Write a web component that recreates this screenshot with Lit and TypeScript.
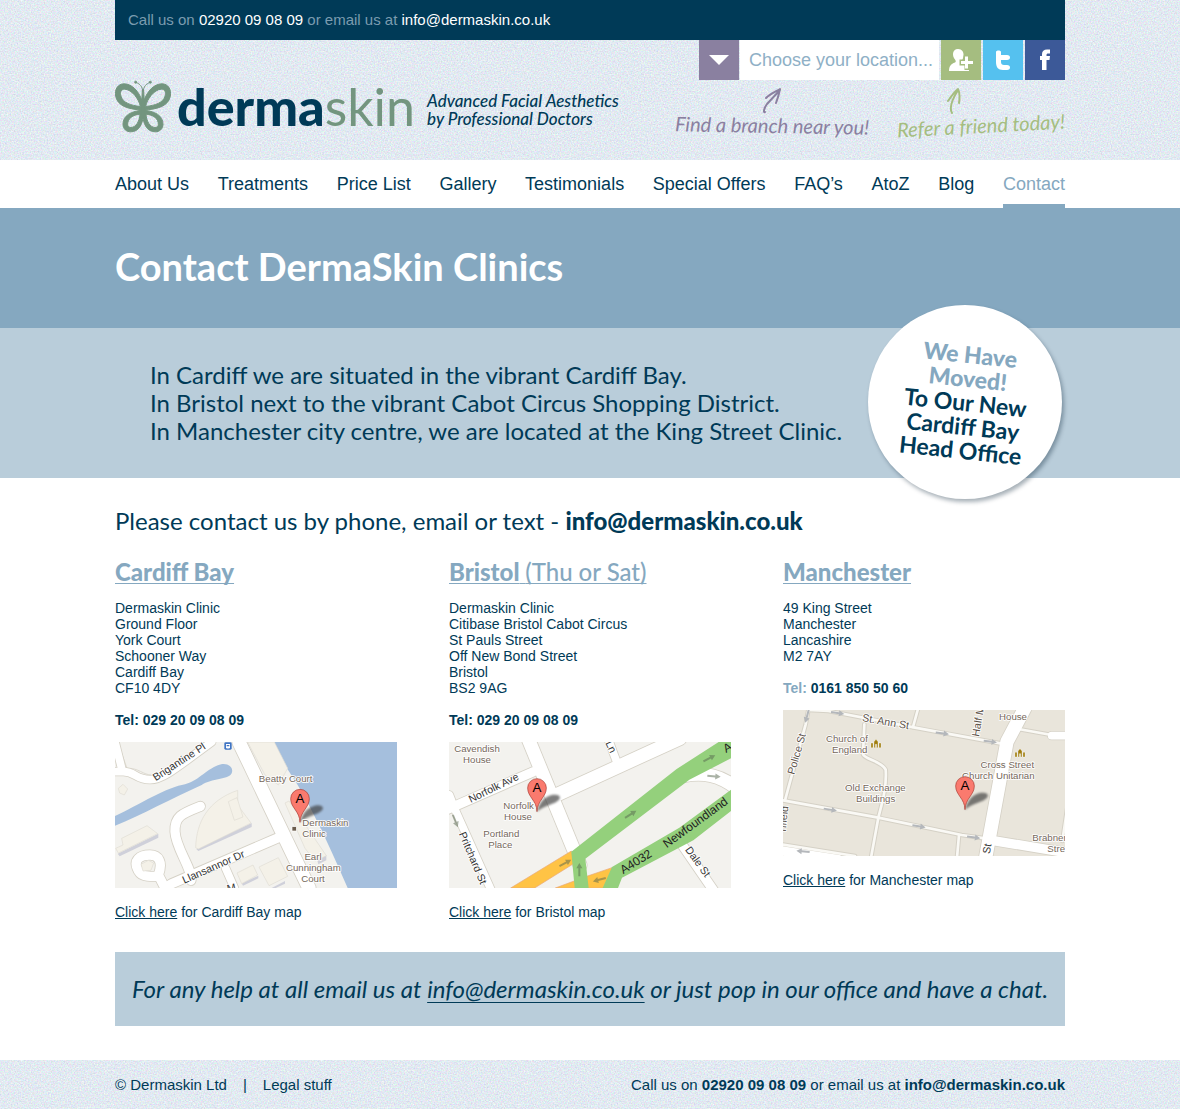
import { LitElement, html, css, svg } from "lit";
import { customElement, property } from "lit/decorators.js";
import { classMap } from "lit/directives/class-map.js";

type MapName = "cardiff" | "bristol" | "manchester";

interface Clinic {
  name: string;
  note?: string;
  address: string[];
  tel: string;
  paleTel?: boolean;
  map: MapName;
  mapLabel: string;
}

const NAV = [
  "About Us", "Treatments", "Price List", "Gallery", "Testimonials",
  "Special Offers", "FAQ’s", "AtoZ", "Blog", "Contact",
];

const CLINICS: Clinic[] = [
  {
    name: "Cardiff Bay",
    address: ["Dermaskin Clinic", "Ground Floor", "York Court", "Schooner Way", "Cardiff Bay", "CF10 4DY"],
    tel: "029 20 09 08 09",
    map: "cardiff",
    mapLabel: "Cardiff Bay",
  },
  {
    name: "Bristol",
    note: "(Thu or Sat)",
    address: ["Dermaskin Clinic", "Citibase Bristol Cabot Circus", "St Pauls Street", "Off New Bond Street", "Bristol", "BS2 9AG"],
    tel: "029 20 09 08 09",
    map: "bristol",
    mapLabel: "Bristol",
  },
  {
    name: "Manchester",
    address: ["49 King Street", "Manchester", "Lancashire", "M2 7AY"],
    tel: "0161 850 50 60",
    paleTel: true,
    map: "manchester",
    mapLabel: "Manchester",
  },
];

/* Pin with its cast shadow; (x, y) is the tip. */
const pin = (x: number, y: number) => svg`
  <g transform="translate(${x} ${y})">
    <path class="pin-shadow" d="M0 0 C6 -24 20 -44 44 -50 C64 -54 74 -46 66 -36 C54 -22 22 -20 0 0Z"/>
    <path class="pin" d="M0 0 C-1 -34 -28 -44 -28 -71 A28 28 0 0 1 28 -71 C28 -44 1 -34 0 0Z"/>
    <text class="pin-letter" x="0" y="-59">A</text>
  </g>`;

const arrow = (x: number, y: number, angle: number) => svg`
  <path class="way" transform="translate(${x} ${y}) rotate(${angle})"
    d="M-20 -3H4V-9L20 0L4 9V3H-20Z"/>`;

const church = (x: number, y: number) => svg`
  <path class="church" transform="translate(${x} ${y})"
    d="M0 8H6V22H0Z M9 4L15 -3L21 4V22H17V12H13V22H9Z M24 8H30V22H24Z"/>`;

const cardiffMap = svg`
  <rect class="land" x="30" y="21" width="846" height="438"/>
  <path class="water" d="M508 21H876V459H728C690 370 640 260 590 170C565 125 520 70 508 21Z"/>
  <path class="water" d="M30 243C110 205 150 175 220 152C280 142 290 112 335 92C365 78 388 95 380 115C370 135 320 130 290 150C200 190 110 240 30 272Z"/>
  <path class="block" d="M30 118L46 121L76 120M38 21L66 100C100 98 115 120 140 120"/>
  <g class="casing">
    <path class="w24" d="M30 110H52C90 108 90 134 135 134C170 134 200 110 320 21"/>
    <path class="w24" d="M30 21L52 108"/>
    <path class="w40" d="M402 21L612 459"/>
    <path class="w28" d="M286 214C230 236 208 244 210 290C212 340 262 400 258 436"/>
    <path class="w28" d="M520 308L200 446L180 459"/>
    <path class="w28" d="M180 459L160 420C175 380 160 360 135 360C100 360 88 378 96 398C106 428 130 424 160 424"/>
    <path class="w24" d="M362 400L388 459"/>
  </g>
  <g class="road">
    <path class="w24" d="M30 110H52C90 108 90 134 135 134C170 134 200 110 320 21"/>
    <path class="w24" d="M30 21L52 108"/>
    <path class="w40" d="M402 21L612 459"/>
    <path class="w28" d="M286 214C230 236 208 244 210 290C212 340 262 400 258 436"/>
    <path class="w28" d="M520 308L200 446L180 459"/>
    <path class="w28" d="M180 459L160 420C175 380 160 360 135 360C100 360 88 378 96 398C106 428 130 424 160 424"/>
    <path class="w24" d="M362 400L388 459"/>
  </g>
  <g class="shade">
    <path d="M274 342L440 264V276L280 348Z"/>
    <path d="M38 356L160 296V308L44 364Z"/>
    <path d="M410 445L460 422V430L414 452Z"/>
    <path d="M500 459L540 438V446L512 459Z"/>
    <path d="M636 372L664 360V376L640 388Z"/>
  </g>
  <g class="building">
    <path d="M272 338C274 260 310 196 398 166V210L438 264L280 342Z"/>
    <path d="M370 200L396 188L414 246L388 256Z"/>
    <path d="M50 310L126 272L158 296L40 354L32 340L54 330Z"/>
    <path d="M396 414L444 390L458 420L410 446Z"/>
    <path d="M462 396L520 368L548 424L492 452Z"/>
    <path d="M428 21H508L548 100L520 150L480 120Z"/>
    <path d="M540 204L552 198L664 362L630 378L600 340Z"/>
    <path d="M40 160L54 148L68 162L58 180L44 174Z"/>
    <path d="M108 388L130 376L146 384L138 406L114 408Z"/>
  </g>
  <g>
    <rect class="bus" x="358" y="22" width="22" height="22" rx="4"/>
    <path class="bus-glyph" d="M363 27H375V39H373V41H370V39H368V41H365V39H363ZM365 30V34H373V30Z"/>
  </g>
  <rect class="spot" x="561" y="275" width="13" height="13"/>
  ${pin(585, 262)}
  <text class="street" transform="translate(152 139) rotate(-33)">Brigantine Pl</text>
  <text class="street" transform="translate(238 446) rotate(-24)">Llansannor Dr</text>
  <text class="street" transform="translate(368 472) rotate(-12)">M</text>
  <text class="place mid" x="542" y="141">Beatty Court</text>
  <text class="place" x="592" y="274">Dermaskin</text>
  <text class="place" x="592" y="306">Clinic</text>
  <text class="place mid" x="624" y="376">Earl</text>
  <text class="place mid" x="625" y="409">Cunningham</text>
  <text class="place mid" x="624" y="441">Court</text>`;

const bristolMap = svg`
  <rect class="land" x="27" y="21" width="846" height="438"/>
  <g class="casing">
    <path class="w40" d="M260 0L420 390"/>
    <path class="w28" d="M20 224L280 110"/>
    <path class="w40" d="M340 184L720 10"/>
    <path class="w24" d="M28 180L46 226L160 480"/>
    <path class="w24" d="M500 0L530 80"/>
    <path class="w28" d="M720 320L830 480"/>
    <path class="w40" d="M730 122C790 110 840 120 890 160"/>
  </g>
  <g class="road">
    <path class="w40" d="M260 0L420 390"/>
    <path class="w28" d="M20 224L280 110"/>
    <path class="w40" d="M340 184L720 10"/>
    <path class="w24" d="M28 180L46 226L160 480"/>
    <path class="w24" d="M500 0L530 80"/>
    <path class="w28" d="M720 320L830 480"/>
    <path class="w40" d="M730 122C790 110 840 120 890 160"/>
  </g>
  <path class="orange" d="M212 459L394 348L404 384L284 459Z"/>
  <path class="orange" d="M346 459L440 424L516 398L500 459Z"/>
  <path class="green" d="M873 21H836L710 102L394 350L404 459H446L436 371L748 134L873 70Z"/>
  <path class="green" d="M873 164L718 278L516 396L488 459H534L546 428L760 316L873 228Z"/>
  <g class="bw">
    ${arrow(376, 384, -28)}${arrow(418, 404, -90)}${arrow(572, 238, -32)}
    ${arrow(808, 70, -28)}${arrow(822, 124, 4)}${arrow(478, 434, 165)}${arrow(46, 258, 68)}
  </g>
  ${pin(291, 230)}
  <text class="place mid" x="111" y="52">Cavendish</text>
  <text class="place mid" x="111" y="85">House</text>
  <text class="street" transform="translate(92 204) rotate(-26)">Norfolk Ave</text>
  <text class="place mid" x="236" y="223">Norfolk</text>
  <text class="place mid" x="234" y="255">House</text>
  <text class="place mid" x="184" y="307">Portland</text>
  <text class="place mid" x="181" y="340">Place</text>
  <text class="street" transform="translate(56 296) rotate(67)">Pritchard St</text>
  <text class="street" transform="translate(496 24) rotate(65)">Ln</text>
  <text class="street" transform="translate(734 344) rotate(54)">Dale St</text>
  <text class="major" transform="translate(550 418) rotate(-32)">A4032</text>
  <text class="major" transform="translate(680 340) rotate(-36)">Newfoundland</text>
  <text class="major" transform="translate(858 54) rotate(-30)">A4</text>`;

const manchesterMap = svg`
  <rect class="town" x="24" y="27" width="846" height="438"/>
  <g class="casing">
    <path class="w12" d="M100 27L92 70L30 298"/>
    <path class="w12" d="M100 27L160 30L420 80L680 128"/>
    <path class="w12" d="M24 298L310 350L560 402L630 412"/>
    <path class="w12" d="M268 70L264 160C270 176 320 180 332 206C336 260 320 310 310 350L288 470"/>
    <path class="w12" d="M552 402L546 470"/>
    <path class="w12" d="M414 78L430 20"/>
    <path class="w12" d="M20 430L240 465"/>
    <path class="w12" d="M730 84L830 102"/>
    <path class="w12" d="M880 300L862 420"/>
    <path class="w40" d="M750 20L696 122L632 470"/>
    <path class="w28" d="M650 418L880 456"/>
    <path class="w24" d="M830 104H880"/>
  </g>
  <g class="road">
    <path class="w12" d="M100 27L92 70L30 298"/>
    <path class="w12" d="M100 27L160 30L420 80L680 128"/>
    <path class="w12" d="M24 298L310 350L560 402L630 412"/>
    <path class="w12" d="M268 70L264 160C270 176 320 180 332 206C336 260 320 310 310 350L288 470"/>
    <path class="w12" d="M552 402L546 470"/>
    <path class="w12" d="M414 78L430 20"/>
    <path class="w12" d="M20 430L240 465"/>
    <path class="w12" d="M730 84L830 102"/>
    <path class="w12" d="M880 300L862 420"/>
    <path class="w40" d="M750 20L696 122L632 470"/>
    <path class="w28" d="M650 418L880 456"/>
    <path class="w24" d="M830 104H880"/>
    <path class="w28" d="M24 450L190 476"/>
  </g>
  ${arrow(96, 46, 105)}${arrow(188, 36, 8)}${arrow(502, 97, 8)}${arrow(646, 122, 8)}
  ${arrow(166, 326, 9)}${arrow(432, 376, 9)}${arrow(596, 409, 8)}${arrow(84, 451, 185)}
  ${church(288, 118)}${church(720, 146)}
  <text class="place mid" x="714" y="58">House</text>
  <text class="place" x="153" y="124">Church of</text>
  <text class="place" x="171" y="156">England</text>
  <text class="place mid" x="301" y="271">Old Exchange</text>
  <text class="place mid" x="302" y="304">Buildings</text>
  <text class="place mid" x="697" y="202">Cross Street</text>
  <text class="place mid" x="670" y="235">Church Unitarian</text>
  <text class="place" x="772" y="420">Brabner</text>
  <text class="place" x="817" y="452">Stre</text>
  <text class="street soft" transform="translate(260 60) rotate(10)">St. Ann St</text>
  <text class="street soft" transform="translate(58 222) rotate(-74)">Police St</text>
  <text class="street soft" transform="translate(612 108) rotate(-80)">Half Moon</text>
  <text class="street soft" transform="translate(32 392) rotate(-84)">nfield</text>
  <text class="street" transform="translate(644 460) rotate(-80)">St</text>
  ${pin(570, 326)}`;

const MAPS = {
  cardiff: { box: "30 21 846 438", art: cardiffMap },
  bristol: { box: "27 21 846 438", art: bristolMap },
  manchester: { box: "24 27 846 438", art: manchesterMap },
};

@customElement("clinic-map")
export class ClinicMap extends LitElement {
  @property() name: MapName = "cardiff";
  @property() label = "";

  static styles = css`
    :host { display: block; }
    svg { display: block; width: 100%; height: auto; font-family: "Liberation Sans", Arial, sans-serif; }
    .land { fill: #f3f2ee; }
    .town { fill: #e9e5db; }
    .water { fill: #a5bfdd; }
    .block { fill: none; stroke: #dedbd2; stroke-width: 3; }
    .casing, .road { fill: none; stroke-linecap: round; stroke-linejoin: round; }
    .casing { stroke: #d5d1c6; }
    .road { stroke: #fff; }
    .casing .w12 { stroke-width: 14; }
    .casing .w24 { stroke-width: 28; }
    .casing .w28 { stroke-width: 33; }
    .casing .w40 { stroke-width: 45; }
    .road .w12 { stroke-width: 8; stroke: #faf9f5; }
    .road .w24 { stroke-width: 23; }
    .road .w28 { stroke-width: 28; }
    .road .w40 { stroke-width: 40; }
    .building { fill: #f4f1e8; stroke: #dfdcd3; stroke-width: 2; }
    .shade { fill: #cfd0da; }
    .orange { fill: #ffc345; stroke: #e8a87c; stroke-width: 2; }
    .green { fill: #94d07c; }
    .way { fill: #b4b7bb; }
    .bw .way { fill: #55664e; opacity: 0.5; }
    .church { fill: #a07d0c; stroke: #fff; stroke-width: 1; }
    .bus { fill: #3f74c4; }
    .bus-glyph { fill: #fff; fill-rule: evenodd; }
    .spot { fill: #6b5c4c; stroke: #fff; stroke-width: 2; }
    .pin { fill: #fa7a6e; stroke: #a63a31; stroke-width: 2; }
    .pin-shadow { fill: #3a3a3a; opacity: 0.65; filter: blur(3px); }
    .pin-letter { font-size: 40px; text-anchor: middle; }
    text { paint-order: stroke; stroke: #fff; stroke-width: 5; stroke-linejoin: round; }
    .pin-letter, .major { stroke: none; }
    .place { font-size: 29px; fill: #75675a; }
    .mid { text-anchor: middle; }
    .street { font-size: 32px; fill: #333; }
    .soft { fill: #5c5148; }
    .major { font-size: 36px; fill: #222; }
  `;

  render() {
    const { box, art } = MAPS[this.name];
    return html`<svg viewBox=${box} role="img" aria-label=${this.label}>${art}</svg>`;
  }
}

/* One side of the butterfly; the other is its mirror image. */
const wings = svg`
  <path d="M101 105C99 62 72 26 42 26C23 26 13 44 17 63C22 91 52 103 101 105ZM91 94C87 72 66 43 44 42C33 42 29 52 33 63C38 82 62 91 91 94Z"/>
  <path d="M101 105C62 107 39 122 39 147C39 162 50 170 62 170C86 170 101 148 101 105ZM90 117C68 119 53 130 53 147C53 153 57 157 63 157C78 156 88 140 90 117Z"/>`;

@customElement("app-root")
export class AppRoot extends LitElement {
  static styles = css`
    :host {
      --navy: #003a57;
      --blue: #85a8c0;
      --pale: #b9cdda;
      --mauve: #8a80a0;
      --leaf: #a5bd80;
      --sage: #73957f;
      --body: "Liberation Sans", Arial, sans-serif;
      --display: Lato, "Open Sans", sans-serif;
      display: block;
      background: #fff;
      color: var(--navy);
      font: 14px/16px var(--body);
    }
    *, *::before, *::after { box-sizing: border-box; }
    h1, h2, h3, p, ul { margin: 0; padding: 0; }
    ul { list-style: none; }
    a { color: inherit; text-decoration: none; }
    .wrap { width: 100%; max-width: 950px; margin: 0 auto; }
    .grain {
      background: #e0e7ee url("data:image/svg+xml,%3Csvg xmlns='http://www.w3.org/2000/svg' width='300' height='300'%3E%3Cfilter id='n' x='0' y='0' width='1' height='1' color-interpolation-filters='sRGB'%3E%3CfeTurbulence type='fractalNoise' baseFrequency='.7' numOctaves='2' seed='4' stitchTiles='stitch'/%3E%3CfeColorMatrix values='.28 0 0 0 .745 0 .28 0 0 .775 0 0 .2 0 .845 0 0 0 0 1'/%3E%3C/filter%3E%3Crect width='300' height='300' filter='url(%23n)'/%3E%3C/svg%3E");
    }

    .topbar {
      display: flex; align-items: center; height: 40px; padding: 0 13px;
      background: var(--navy); color: #7b9cb0; font-size: 15px;
    }
    .topbar p a { color: #fff; }
    .masthead { display: flex; justify-content: space-between; min-height: 120px; }
    .brand { display: flex; align-items: center; gap: 6px; padding-top: 12px; }
    .butterfly { width: 56px; height: 53px; fill: var(--sage); fill-rule: evenodd; stroke: var(--sage); stroke-width: 3; }
    .butterfly .feeler { fill: none; }
    .wordmark { font: 900 52px/60px var(--display); color: var(--navy); }
    .wordmark span { font-weight: 400; color: var(--sage); }
    .tagline { font: italic 500 17px/18px var(--display); padding: 8px 0 0 6px; }

    .tools { display: flex; flex-direction: column; align-items: flex-end; gap: 6px; }
    .toolrow { display: flex; gap: 2px; }
    .picker { display: flex; gap: 1px; }
    .tile { display: grid; place-items: center; width: 40px; height: 40px; }
    .tile svg { width: 26px; height: 26px; fill: #fff; }
    .drop { background: var(--mauve); }
    .refer { background: var(--leaf); }
    .twitter { background: #55c1ef; }
    .facebook { background: #3c5998; }
    select {
      appearance: none; width: 199px; height: 40px; padding: 0 0 0 9px; border: 0; border-radius: 0;
      background: #fff; color: #8fb0c6; font: 18px/24px var(--body);
    }
    .notes { display: flex; gap: 28px; }
    .note { display: flex; flex-direction: column; align-items: center; font: italic 20px/22px var(--display); }
    .note svg { width: 20px; height: 28px; fill: none; stroke: currentColor; stroke-width: 2; stroke-linecap: round; stroke-linejoin: round; }
    .note.branch { color: var(--mauve); }
    .note.branch span { transform: rotate(1deg); }
    .note.friend { color: var(--leaf); }
    .note.friend span { transform: rotate(-3deg); }
    .note.friend svg { align-self: flex-start; margin-left: 48px; }

    .nav ul { display: flex; justify-content: space-between; height: 48px; }
    .nav a { display: block; height: 48px; font-size: 18px; line-height: 48px; }
    .nav a.current { color: var(--blue); border-bottom: 4px solid var(--blue); }

    .hero { background: var(--blue); color: #fff; }
    h1 { font: 700 38px/116px var(--display); padding-bottom: 4px; }
    .lead { background: var(--pale); }
    .lead .wrap { position: relative; padding: 33px 35px 32px; }
    .lead p { font: 24px/28px var(--display); min-height: 85px; }
    .badge {
      position: absolute; right: 3px; top: -23px; width: 194px; height: 194px;
      display: grid; place-items: center; border-radius: 50%; background: #fff;
      box-shadow: 2px 3px 4px rgba(0, 30, 50, 0.35);
      font: 700 23px/24px var(--display); text-align: center;
    }
    .badge div { transform: rotate(6deg); }
    .badge span { display: block; }
    .badge strong { color: var(--blue); font-weight: 900; }

    .intro { font: 24px/28px var(--display); padding: 29px 0 23px; }
    .intro strong { font-weight: 900; }
    .clinics { display: grid; grid-template-columns: repeat(3, minmax(0, 1fr)); gap: 52px; }
    .clinic { display: flex; flex-direction: column; }
    h2 { font: 900 24px/28px var(--display); color: var(--blue); padding-bottom: 14px; }
    h2 a { text-decoration: underline; text-decoration-thickness: 1px; text-underline-offset: 2px; text-decoration-skip-ink: none; }
    h2 span { font-weight: 500; }
    .tel { padding: 16px 0 14px; font-weight: 700; }
    .tel.pale span { color: var(--blue); }
    .maplink { padding-top: 16px; }
    .maplink a { text-decoration: underline; }

    .help {
      margin-top: 32px; margin-bottom: 34px; padding: 21px 12px; background: var(--pale);
      font: italic 24px/32px var(--display); text-align: center;
    }
    .help a { text-decoration: underline; text-decoration-thickness: 1px; text-underline-offset: 4px; }
    .footer .wrap { display: flex; justify-content: space-between; align-items: center; min-height: 49px; font-size: 15px; }
    .footer ul { display: flex; }
    .footer li + li::before { content: "|"; padding: 0 16px; }
    .footer p a { font-weight: 700; }
  `;

  private clinic(c: Clinic) {
    return html`
      <section class="clinic">
        <h2><a href="#${c.map}">${c.name}${c.note ? html` <span>${c.note}</span>` : ""}</a></h2>
        ${c.address.map((line) => html`<p>${line}</p>`)}
        <p class=${classMap({ tel: true, pale: !!c.paleTel })}><span>Tel:</span> ${c.tel}</p>
        <clinic-map .name=${c.map} .label=${c.mapLabel}></clinic-map>
        <p class="maplink"><a href="#${c.map}-map">Click here</a> for ${c.mapLabel} map</p>
      </section>`;
  }

  render() {
    return html`
      <header class="grain">
        <div class="wrap">
          <div class="topbar">
            <p>Call us on <a href="tel:02920090809">02920 09 08 09</a> or email us at <a href="mailto:info@dermaskin.co.uk">info@dermaskin.co.uk</a></p>
          </div>
          <div class="masthead">
            <div class="brand">
              <svg class="butterfly" viewBox="15 15 168 158" aria-hidden="true">
                <g>${wings}</g>
                <g transform="translate(198 0) scale(-1 1)">${wings}</g>
                <path d="M97 44H101L104 105L101 130H97L94 105Z"/>
                <path class="feeler" d="M99 50C97 34 90 26 78 22M99 50C101 34 108 26 120 22"/>
                <circle cx="77" cy="21" r="3"/><circle cx="121" cy="21" r="3"/>
              </svg>
              <div class="wordmark">derma<span>skin</span></div>
              <p class="tagline">Advanced Facial Aesthetics<br>by Professional Doctors</p>
            </div>
            <div class="tools">
              <div class="toolrow">
                <div class="picker">
                  <label class="tile drop" for="location" aria-label="Choose your location">
                    <svg viewBox="0 0 26 26"><path d="M3 8H23L13 18Z"/></svg>
                  </label>
                  <select id="location">
                    <option>Choose your location...</option>
                    ${CLINICS.map((c) => html`<option>${c.name}</option>`)}
                  </select>
                </div>
                <a class="tile refer" href="#refer" aria-label="Refer a friend">
                  <svg viewBox="0 0 26 26"><path d="M10 2C14 2 16 5 15.500 9C15 12 14 13 14 14C14 15 15 15.500 17 16C20 17 21 20 21 24H1C1 19 3 17 7 15.500C8 15 8 14 7 12.500C4 9 4 2 10 2Z"/><path d="M15.500 8.500H20.500V12.500H26V18.500H21.500V23H16.500V18.500H11.500V12.500H15.500Z" fill="#a5bd80"/><path d="M17 9.500H20V14H25V17H20V21.500H17V17H13V14H17Z"/></svg>
                </a>
                <a class="tile twitter" href="#twitter" aria-label="Twitter">
                  <svg viewBox="0 0 26 26"><path d="M6 5C6 3 11 3 11 5V8H17C21 8 21 13 17 13H11V15C11 17 12 18 14 18H17C21 18 21 23 17 23H13C8 23 6 20 6 15Z"/></svg>
                </a>
                <a class="tile facebook" href="#facebook" aria-label="Facebook">
                  <svg viewBox="0 0 26 26"><path d="M10 23V13H8V9H10V7C10 4 12 2.500 15 2.500H18V6.500H16C15 6.500 14.500 7 14.500 8V9H18L17.500 13H14.500V23Z"/></svg>
                </a>
              </div>
              <div class="notes">
                <div class="note branch">
                  <svg viewBox="0 0 20 28"><path d="M3 26C1 27 2 22 5 18L18 4M4 12C8 8 13 6 18 3C17 8 16 12 14 17"/></svg>
                  <span>Find a branch near you!</span>
                </div>
                <div class="note friend">
                  <svg viewBox="0 0 20 28"><path d="M7 27C4 22 8 12 13 4M3 15C6 11 9 6 13 3C15 7 15 11 14 17"/></svg>
                  <span>Refer a friend today!</span>
                </div>
              </div>
            </div>
          </div>
        </div>
      </header>

      <nav class="nav">
        <ul class="wrap">
          ${NAV.map((item) => html`<li><a href="#" class=${classMap({ current: item === "Contact" })}>${item}</a></li>`)}
        </ul>
      </nav>

      <main>
        <div class="hero"><h1 class="wrap">Contact DermaSkin Clinics</h1></div>
        <div class="lead">
          <div class="wrap">
            <p>In Cardiff we are situated in the vibrant Cardiff Bay.<br>In Bristol next to the vibrant Cabot Circus Shopping District.<br>In Manchester city centre, we are located at the King Street Clinic.</p>
            <div class="badge"><div>
              <strong><span>We Have</span><span>Moved!</span></strong>
              <span>To Our New</span><span>Cardiff Bay</span><span>Head Office</span>
            </div></div>
          </div>
        </div>
        <div class="wrap">
          <p class="intro">Please contact us by phone, email or text - <a href="mailto:info@dermaskin.co.uk"><strong>info@dermaskin.co.uk</strong></a></p>
          <div class="clinics">${CLINICS.map((c) => this.clinic(c))}</div>
          <p class="help">For any help at all email us at <a href="mailto:info@dermaskin.co.uk">info@dermaskin.co.uk</a> or just pop in our office and have a chat.</p>
        </div>
      </main>

      <footer class="footer grain">
        <div class="wrap">
          <ul><li>© Dermaskin Ltd</li><li><a href="#legal">Legal stuff</a></li></ul>
          <p>Call us on <a href="tel:02920090809">02920 09 08 09</a> or email us at <a href="mailto:info@dermaskin.co.uk">info@dermaskin.co.uk</a></p>
        </div>
      </footer>`;
  }
}
